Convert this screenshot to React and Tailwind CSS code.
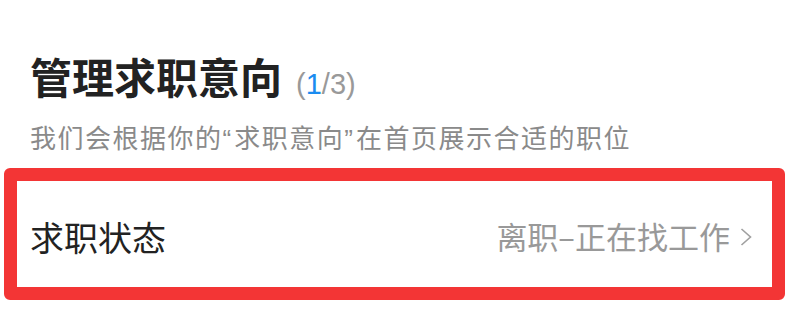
export default function App() {
  const font = { fontFamily: '"Noto Sans CJK SC", "Noto Sans", sans-serif' };
  const latin = { fontFamily: '"Liberation Sans", Arial, sans-serif' };
  return (
    <div className="w-[787px] h-[323px] bg-white overflow-hidden" style={font}>
      <div className="pt-[50px] pl-[30px] flex items-baseline">
        <span className="text-[42px] leading-[52px] font-bold text-[#222]">管理求职意向</span>
        <span className="ml-[14px] text-[29px] text-[#999]" style={latin}>
          (<span className="text-[#1a8cf0]">1</span>/3)
        </span>
      </div>
      <div className="pl-[30px] mt-[13px] text-[26px] leading-[34px] tracking-[1.5px] text-[#8a8a8a]">
        我们会根据你的<span style={latin} className="tracking-[3px]">“</span>求职意向<span style={latin} className="tracking-[3px]">”</span>在首页展示合适的职位
      </div>
      <div className="ml-[4px] mt-[12px] w-[781px] h-[132px] border-[13px] border-[#f33535] rounded-[6px] flex items-center">
        <div className="flex-1 flex items-center justify-between pl-[13px] pr-[20px] pt-[6px]">
          <span className="text-[34px] text-[#222]">求职状态</span>
          <span className="flex items-center text-[31px] text-[#999]">
            离职–正在找工作
            <svg width="12" height="18" viewBox="0 0 12 18" className="ml-[10px]" fill="none" stroke="#a0a0a0" strokeWidth="1.6">
              <path d="M1.5 1 L10.5 9 L1.5 17" />
            </svg>
          </span>
        </div>
      </div>
    </div>
  );
}
